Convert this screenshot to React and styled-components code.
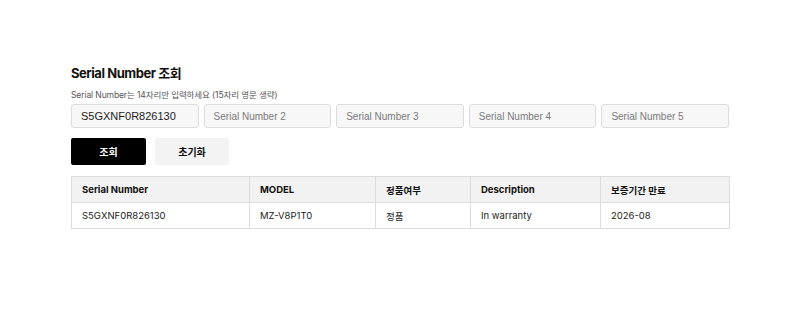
import React from 'react';
import styled, { createGlobalStyle } from 'styled-components';

const GlobalStyle = createGlobalStyle`
    body {
        margin: 0;
        background: #ffffff;
        font-family: Inter, "Noto Sans CJK KR", sans-serif;
        color: #111;
    }
`;

const Page = styled.div`
    width: 800px;
    height: 312px;
    padding: 64px 0 0 71px;
    box-sizing: border-box;
`;

const Section = styled.section`
    width: 658px;
`;

const Title = styled.h2`
    margin: 0 0 8px;
    font-size: 13px;
    line-height: 18px;
    font-weight: 700;
    color: #111;
    letter-spacing: -0.45px;
`;

const Hint = styled.p`
    margin: 0 0 3px;
    font-size: 8.5px;
    line-height: 11px;
    color: #555;
    letter-spacing: -0.1px;
`;

const InputRow = styled.div`
    display: grid;
    grid-template-columns: repeat(5, 1fr);
    gap: 5px;
`;

const SerialInput = styled.input`
    height: 24px;
    box-sizing: border-box;
    padding: 0 9px;
    border: 1px solid #dcdcdc;
    border-radius: 3px;
    background: #f7f7f7;
    font-family: "Liberation Sans", Arial, sans-serif;
    font-size: 11px;
    color: #222;
    min-width: 0;
    outline: none;

    &::placeholder {
        color: #7a7a7a;
        font-size: 10px;
    }
`;

const ButtonRow = styled.div`
    display: flex;
    gap: 9px;
    margin-top: 10px;
`;

const Button = styled.button`
    width: ${props => props.$width}px;
    height: 27px;
    border: none;
    border-radius: 2px;
    background: ${props => props.$primary ? '#000' : '#f3f3f3'};
    color: ${props => props.$primary ? '#fff' : '#111'};
    font-family: "Noto Sans CJK KR", sans-serif;
    font-size: 10px;
    font-weight: 700;
    cursor: pointer;
`;

const Table = styled.table`
    width: 658px;
    margin-top: 11px;
    border-collapse: collapse;
    table-layout: fixed;
    font-size: 9.5px;
`;

const HeadCell = styled.th`
    box-sizing: border-box;
    width: ${props => props.$width}px;
    height: 26px;
    padding: 0 10px;
    text-align: left;
    font-weight: 700;
    background: #f2f2f2;
    border: 1px solid #dcdcdc;
    color: #111;
`;

const Cell = styled.td`
    height: 25px;
    padding: 0 10px;
    border: 1px solid #dcdcdc;
    color: #222;
`;

const columns = [
    { label: 'Serial Number', width: 178 },
    { label: 'MODEL', width: 126 },
    { label: '정품여부', width: 95 },
    { label: 'Description', width: 130 },
    { label: '보증기간 만료', width: 129 }
];

const rows = [
    ['S5GXNF0R826130', 'MZ-V8P1T0', '정품', 'In warranty', '2026-08']
];

export default function App() {
    return (
        <>
            <GlobalStyle />
            <Page>
                <Section>
                    <Title>Serial Number 조회</Title>
                    <Hint>Serial Number는 14자리만 입력하세요 (15자리 영문 생략)</Hint>
                    <InputRow>
                        <SerialInput defaultValue="S5GXNF0R826130" />
                        <SerialInput placeholder="Serial Number 2" />
                        <SerialInput placeholder="Serial Number 3" />
                        <SerialInput placeholder="Serial Number 4" />
                        <SerialInput placeholder="Serial Number 5" />
                    </InputRow>
                    <ButtonRow>
                        <Button $primary $width={75}>조회</Button>
                        <Button $width={74}>초기화</Button>
                    </ButtonRow>
                    <Table>
                        <thead>
                            <tr>
                                {columns.map(col => (
                                    <HeadCell key={col.label} $width={col.width}>{col.label}</HeadCell>
                                ))}
                            </tr>
                        </thead>
                        <tbody>
                            {rows.map((row, i) => (
                                <tr key={i}>
                                    {row.map((value, j) => <Cell key={j}>{value}</Cell>)}
                                </tr>
                            ))}
                        </tbody>
                    </Table>
                </Section>
            </Page>
        </>
    );
}
